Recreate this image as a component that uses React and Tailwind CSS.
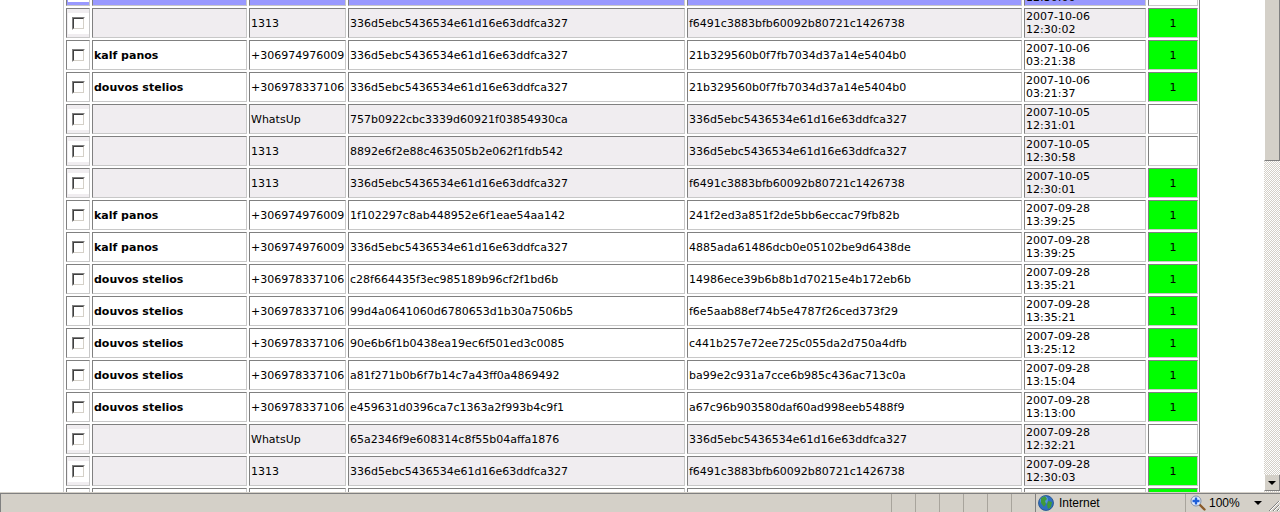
const rows = [
  { name: "", phone: "1313", from: "336d5ebc5436534e61d16e63ddfca327", to: "f6491c3883bfb60092b80721c1426738", date: "2007-10-06", time: "12:30:02", ok: true },
  { name: "kalf panos", phone: "+306974976009", from: "336d5ebc5436534e61d16e63ddfca327", to: "21b329560b0f7fb7034d37a14e5404b0", date: "2007-10-06", time: "03:21:38", ok: true },
  { name: "douvos stelios", phone: "+306978337106", from: "336d5ebc5436534e61d16e63ddfca327", to: "21b329560b0f7fb7034d37a14e5404b0", date: "2007-10-06", time: "03:21:37", ok: true },
  { name: "", phone: "WhatsUp", from: "757b0922cbc3339d60921f03854930ca", to: "336d5ebc5436534e61d16e63ddfca327", date: "2007-10-05", time: "12:31:01", ok: false },
  { name: "", phone: "1313", from: "8892e6f2e88c463505b2e062f1fdb542", to: "336d5ebc5436534e61d16e63ddfca327", date: "2007-10-05", time: "12:30:58", ok: false },
  { name: "", phone: "1313", from: "336d5ebc5436534e61d16e63ddfca327", to: "f6491c3883bfb60092b80721c1426738", date: "2007-10-05", time: "12:30:01", ok: true },
  { name: "kalf panos", phone: "+306974976009", from: "1f102297c8ab448952e6f1eae54aa142", to: "241f2ed3a851f2de5bb6eccac79fb82b", date: "2007-09-28", time: "13:39:25", ok: true },
  { name: "kalf panos", phone: "+306974976009", from: "336d5ebc5436534e61d16e63ddfca327", to: "4885ada61486dcb0e05102be9d6438de", date: "2007-09-28", time: "13:39:25", ok: true },
  { name: "douvos stelios", phone: "+306978337106", from: "c28f664435f3ec985189b96cf2f1bd6b", to: "14986ece39b6b8b1d70215e4b172eb6b", date: "2007-09-28", time: "13:35:21", ok: true },
  { name: "douvos stelios", phone: "+306978337106", from: "99d4a0641060d6780653d1b30a7506b5", to: "f6e5aab88ef74b5e4787f26ced373f29", date: "2007-09-28", time: "13:35:21", ok: true },
  { name: "douvos stelios", phone: "+306978337106", from: "90e6b6f1b0438ea19ec6f501ed3c0085", to: "c441b257e72ee725c055da2d750a4dfb", date: "2007-09-28", time: "13:25:12", ok: true },
  { name: "douvos stelios", phone: "+306978337106", from: "a81f271b0b6f7b14c7a43ff0a4869492", to: "ba99e2c931a7cce6b985c436ac713c0a", date: "2007-09-28", time: "13:15:04", ok: true },
  { name: "douvos stelios", phone: "+306978337106", from: "e459631d0396ca7c1363a2f993b4c9f1", to: "a67c96b903580daf60ad998eeb5488f9", date: "2007-09-28", time: "13:13:00", ok: true },
  { name: "", phone: "WhatsUp", from: "65a2346f9e608314c8f55b04affa1876", to: "336d5ebc5436534e61d16e63ddfca327", date: "2007-09-28", time: "12:32:21", ok: false },
  { name: "", phone: "1313", from: "336d5ebc5436534e61d16e63ddfca327", to: "f6491c3883bfb60092b80721c1426738", date: "2007-09-28", time: "12:30:03", ok: true },
];

const cols = "grid grid-cols-[24px_155px_97px_337px_335px_122px_50px] gap-x-[2px]";
const cell = "border border-t-[#808080] border-l-[#808080] border-r-[#c8c8c8] border-b-[#c8c8c8]";

const Checkbox = () => (
  <span className="size-[21px] bg-white flex items-center justify-center">
    <span className="size-[13px] border border-t-[#808080] border-l-[#808080] border-r-white border-b-white">
      <span className="block size-[11px] bg-white border border-t-[#404040] border-l-[#404040] border-r-[#d4d0c8] border-b-[#d4d0c8]"></span>
    </span>
  </span>
);

// bg comes from the row: blue header strip, white for known contacts, grey otherwise
const Row = ({ row, bg }) => (
  <div className={`${cols} h-[30px] text-[11px] leading-[13px] text-black`}>
    <div className={`${cell} ${bg} flex items-center justify-center`}>
      <Checkbox />
    </div>
    <div className={`${cell} ${bg} flex items-center pl-px font-bold`}>{row.name}</div>
    <div className={`${cell} ${bg} flex items-center pl-px`}>{row.phone}</div>
    <div className={`${cell} ${bg} flex items-center pl-px`}>{row.from}</div>
    <div className={`${cell} ${bg} flex items-center pl-px`}>{row.to}</div>
    <div className={`${cell} ${bg} flex flex-col justify-center pl-px`}>
      <span>{row.date}</span>
      <span>{row.time}</span>
    </div>
    <div className={`${cell} flex items-center justify-center ${row.ok ? "bg-[#00ff00]" : "bg-white"}`}>
      {row.ok ? "1" : ""}
    </div>
  </div>
);

const Scrollbar = () => (
  <div className="w-4 flex flex-col bg-[repeating-conic-gradient(#d4d0c8_0_25%,#ffffff_0_50%)] bg-[length:2px_2px]">
    <div className="h-[161px] bg-[#d4d0c8] border-l border-l-white border-r border-r-[#808080] border-b border-b-[#808080]"></div>
    <div className="flex-1"></div>
    <div className="h-[16px] mb-px bg-[#d4d0c8] border-l border-l-white border-r border-r-[#808080] border-b border-b-[#808080] flex items-center justify-center">
      <span className="border-x-[4px] border-x-transparent border-t-[4px] border-t-black"></span>
    </div>
  </div>
);

const Globe = () => (
  <svg width="16" height="16" viewBox="0 0 16 16">
    <circle cx="8" cy="8" r="7.5" fill="#2f6fc0" />
    <circle cx="6" cy="5" r="4" fill="#6fb0e8" opacity="0.6" />
    <path d="M3 3 L7 1 L9 4 L7 6 L8 9 L6 12 L3 8 Z M10 6 L14 7 L13 12 L10 14 L9 10 Z" fill="#3f9a3c" />
    <circle cx="8" cy="8" r="7.5" fill="none" stroke="#1e4f8c" strokeWidth="0.8" />
  </svg>
);

const ZoomIcon = () => (
  <svg width="16" height="16" viewBox="0 0 16 16">
    <path d="M9.5 9.5 L14.5 14.5" stroke="#8a5a2a" strokeWidth="2.4" strokeLinecap="round" />
    <circle cx="6" cy="6" r="5" fill="#e8f0ff" stroke="#7f8fa8" />
    <path d="M6 2.5 V9.5 M2.5 6 H9.5" stroke="#1f5fd8" strokeWidth="2.4" />
  </svg>
);

const Grip = () => (
  <svg width="13" height="13" viewBox="0 0 13 13">
    <path d="M12 2 L2 12 M12 6 L6 12 M12 10 L10 12" stroke="#808080" strokeWidth="1" />
    <path d="M13 2 L3 12 M13 6 L7 12 M13 10 L11 12" stroke="#ffffff" strokeWidth="1" />
  </svg>
);

const StatusBar = () => (
  <div className="h-[20px] bg-[#d4d0c8] border-t border-t-[#d4d0c8] font-['Liberation_Sans',sans-serif] text-[12px] text-black">
    <div className="h-full border-t border-t-[#808080] border-l border-l-[#808080] flex">
      <div className="flex-1"></div>
      {[0, 1, 2, 3, 4, 5].map((i) => (
        <div key={i} className="w-[24px] border-l border-l-[#a8a49c]"></div>
      ))}
      <div className="w-[151px] border-l border-l-[#808080] border-r border-r-[#a8a49c] flex items-center gap-[5px] pl-[2px]">
        <Globe />
        <span>Internet</span>
      </div>
      <div className="w-[94px] relative flex items-center pl-[4px]">
        <ZoomIcon />
        <span className="ml-[3px]">100%</span>
        <span className="ml-[14px] border-x-[4px] border-x-transparent border-t-[4px] border-t-black"></span>
        <span className="absolute right-0 bottom-0 flex">
          <Grip />
        </span>
      </div>
    </div>
  </div>
);

export default function App() {
  return (
    <div className="font-['DejaVu_Sans',sans-serif] h-[512px] w-[1280px] overflow-hidden flex flex-col bg-white">
      <div className="flex-1 flex min-h-0">
        <div className="flex-1 overflow-hidden pl-[63px]">
          <div className="w-[1137px] -mt-[24px] border-l border-l-[#c8c8c8] border-r border-r-[#808080] pl-[2px] pr-px flex flex-col gap-y-[2px]">
            <div className={`${cols} h-[30px] text-[11px] leading-[13px] text-black`}>
              <div className={`${cell} bg-[#9999ff] flex items-center justify-center`}>
                <Checkbox />
              </div>
              <div className={`${cell} bg-[#9999ff]`}></div>
              <div className={`${cell} bg-[#9999ff]`}></div>
              <div className={`${cell} bg-[#9999ff]`}></div>
              <div className={`${cell} bg-[#9999ff]`}></div>
              <div className={`${cell} bg-[#9999ff] flex flex-col justify-center pl-px`}>
                <span>2007-10-06</span>
                <span>12:30:00</span>
              </div>
              <div className={`${cell} bg-white`}></div>
            </div>
            {rows.map((row, i) => (
              <Row key={i} row={row} bg={row.name ? "bg-white" : "bg-[#f0edf0]"} />
            ))}
            <div className={`${cols} h-[30px]`}>
              <div className={cell}></div>
              <div className={cell}></div>
              <div className={cell}></div>
              <div className={cell}></div>
              <div className={cell}></div>
              <div className={cell}></div>
              <div className={`${cell} bg-[#00ff00]`}></div>
            </div>
          </div>
        </div>
        <Scrollbar />
      </div>
      <StatusBar />
    </div>
  );
}
